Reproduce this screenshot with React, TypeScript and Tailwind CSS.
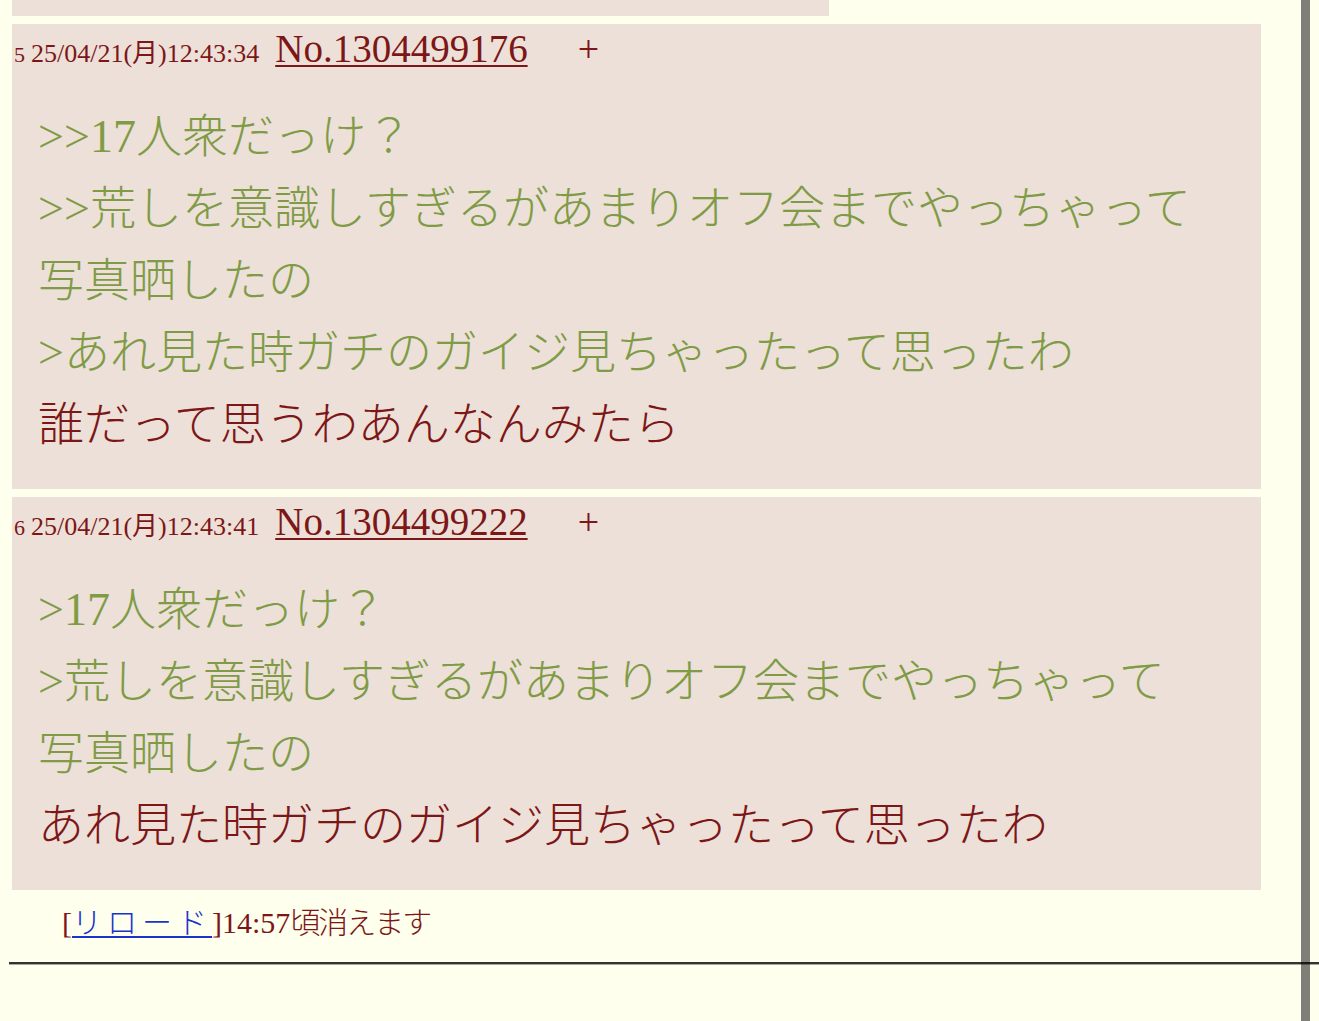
import React from "react";

const font = { fontFamily: '"Liberation Serif", "Noto Sans CJK JP", serif' };

type Line = { text: string; quote?: boolean };

type Post = { idx: string; date: string; no: string; lines: Line[] };

const posts: Post[] = [
  {
    idx: "5",
    date: "25/04/21(月)12:43:34",
    no: "No.1304499176",
    lines: [
      { text: ">>17人衆だっけ？", quote: true },
      { text: ">>荒しを意識しすぎるがあまりオフ会までやっちゃって", quote: true },
      { text: "写真晒したの", quote: true },
      { text: ">あれ見た時ガチのガイジ見ちゃったって思ったわ", quote: true },
      { text: "誰だって思うわあんなんみたら" },
    ],
  },
  {
    idx: "6",
    date: "25/04/21(月)12:43:41",
    no: "No.1304499222",
    lines: [
      { text: ">17人衆だっけ？", quote: true },
      { text: ">荒しを意識しすぎるがあまりオフ会までやっちゃって", quote: true },
      { text: "写真晒したの", quote: true },
      { text: "あれ見た時ガチのガイジ見ちゃったって思ったわ" },
    ],
  },
];

function Reply({ post }: Readonly<{ post: Post }>) {
  return (
    <div className="mt-2 w-[1249px] bg-[#ece0d8] pt-[5px] pb-[28px]">
      <div className="h-[40px] pl-[2px] text-[39px] leading-[40px] text-[#7d1616] whitespace-nowrap">
        <span className="text-[22px]">{post.idx}</span>
        <span className="text-[26px] ml-[6px]">{post.date}</span>
        <a className="ml-[16px] underline decoration-2 underline-offset-[3px]">{post.no}</a>
        <span className="text-[38px] ml-[50px]">+</span>
      </div>
      <div className="mt-[32px] ml-[26px] text-[46px] leading-[72px] whitespace-nowrap font-light">
        {post.lines.map((l, i) => (
          <div key={i} className={l.quote ? "h-[72px] text-[#7f9b46]" : "h-[72px] text-[#7d1616]"}>
            {l.text}
          </div>
        ))}
      </div>
    </div>
  );
}

export default function App() {
  return (
    <div className="relative min-h-[1021px] bg-[#ffffee] overflow-hidden" style={font}>
      <div className="pl-[12px]">
        <div className="w-[817px] h-[16px] bg-[#ece0d8]" />
        {posts.map((p) => (
          <Reply key={p.no} post={p} />
        ))}
      </div>

      <div className="h-[40px] mt-[13px] pl-[62px] text-[30px] leading-[40px] text-[#7d1616] font-light">
        [<a className="text-[#1a33cc] underline decoration-2 underline-offset-[3px] tracking-[5px]">リロード</a>]14:57<span className="tracking-[-2px]">頃消えます</span>
      </div>

      <div className="mt-[19px] ml-[9px]">
        <div className="h-[2px] bg-[#333333]" />
        <div className="h-px bg-[#a8a8a0]" />
      </div>

      <div className="absolute top-0 bottom-0 right-[9px] w-[9px] bg-black/50" />
    </div>
  );
}
